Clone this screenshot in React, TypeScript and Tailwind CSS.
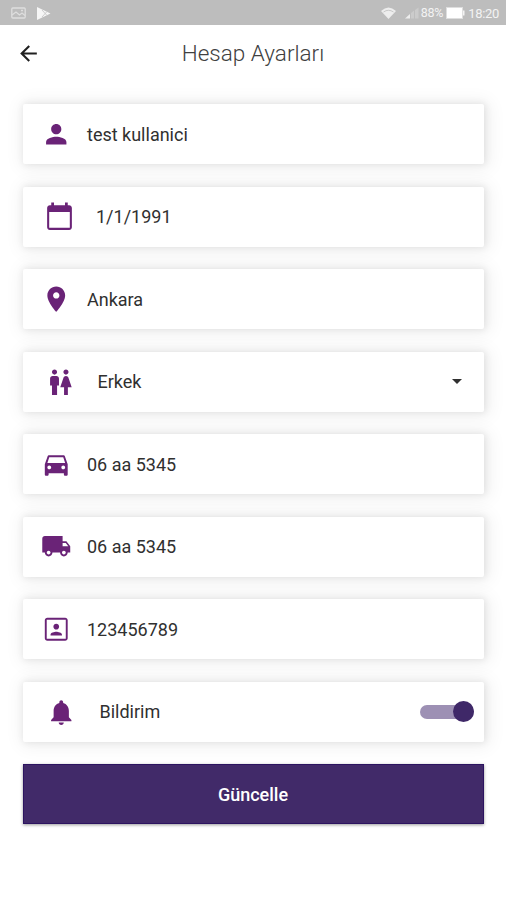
import { useState, type ReactNode } from 'react';

const icons = {
  back: 'M20 11H7.83l5.59-5.59L12 4l-8 8 8 8 1.41-1.41L7.83 13H20v-2z',
  person:
    'M12 12c2.21 0 4-1.79 4-4s-1.79-4-4-4-4 1.79-4 4 1.79 4 4 4zm0 2c-2.67 0-8 1.34-8 4v2h16v-2c0-2.66-5.33-4-8-4z',
  calendar:
    'M19 3h-1V1h-2v2H8V1H6v2H5c-1.11 0-1.99.9-1.99 2L3 19c0 1.1.89 2 2 2h14c1.1 0 2-.9 2-2V5c0-1.1-.9-2-2-2zm0.500 16.500H4.500V8h15v11.500z',
  place:
    'M12 2C8.13 2 5 5.13 5 9c0 5.25 7 13 7 13s7-7.75 7-13c0-3.87-3.13-7-7-7zm0 9.5c-1.38 0-2.5-1.12-2.5-2.5s1.12-2.5 2.5-2.5 2.5 1.12 2.5 2.5-1.12 2.5-2.5 2.5z',
  gender:
    'M5.5 22v-7.5H4V9c0-1.1.9-2 2-2h3c1.1 0 2 .9 2 2v5.5H9.5V22h-4zM18 22v-6h3l-2.54-7.63C18.18 7.55 17.42 7 16.56 7h-.12c-.86 0-1.63.55-1.9 1.37L12 16h3v6h3zM7.5 6c1.11 0 2-.89 2-2s-.89-2-2-2-2 .89-2 2 .89 2 2 2zm9 0c1.11 0 2-.89 2-2s-.89-2-2-2-2 .89-2 2 .89 2 2 2z',
  car: 'M18.92 6.01C18.72 5.42 18.16 5 17.5 5h-11c-.66 0-1.21.42-1.42 1.01L3 12v8c0 .55.45 1 1 1h1c.55 0 1-.45 1-1v-1h12v1c0 .55.45 1 1 1h1c.55 0 1-.45 1-1v-8l-2.08-5.99zM6.5 16c-.83 0-1.5-.67-1.5-1.5S5.67 13 6.5 13s1.5.67 1.5 1.5S7.33 16 6.5 16zm11 0c-.83 0-1.5-.67-1.5-1.5s.67-1.5 1.5-1.5 1.5.67 1.5 1.5-.67 1.5-1.5 1.5zM5 11l1.5-4.5h11L19 11H5z',
  truck:
    'M20 8h-3V4H3c-1.1 0-2 .9-2 2v11h2c0 1.66 1.34 3 3 3s3-1.34 3-3h6c0 1.66 1.34 3 3 3s3-1.34 3-3h2v-5l-3-4zM6 18.5c-.83 0-1.5-.67-1.5-1.5s.67-1.5 1.5-1.5 1.5.67 1.5 1.5-.67 1.5-1.5 1.5zm13.5-9l1.96 2.5H17V9.5h2.5zm-1.5 9c-.83 0-1.5-.67-1.5-1.5s.67-1.5 1.5-1.5 1.5.67 1.5 1.5-.67 1.5-1.5 1.5z',
  portrait:
    'M12 12.25c1.24 0 2.25-1.01 2.25-2.25S13.24 7.75 12 7.75 9.75 8.76 9.75 10s1.01 2.25 2.25 2.25zm4.5 4c0-1.5-3-2.25-4.5-2.25s-4.5.75-4.5 2.25V17h9v-.75zM19 3H5c-1.1 0-2 .9-2 2v14c0 1.1.9 2 2 2h14c1.1 0 2-.9 2-2V5c0-1.1-.9-2-2-2zm0.500 16.500H4.500V4.500h15v15z',
  bell: 'M12 22c1.1 0 2-.9 2-2h-4c0 1.1.89 2 2 2zm6-6v-5c0-3.07-1.64-5.64-4.5-6.32V4c0-.83-.67-1.5-1.5-1.5s-1.5.67-1.5 1.5v.68C7.63 5.36 6 7.92 6 11v5l-2 2v1h16v-1l-2-2z'
};

type IconName = keyof typeof icons;

function Icon({ name, className }: { name: IconName; className: string }) {
  return (
    <svg className={className} viewBox="0 0 24 24" fill="currentColor">
      <path d={icons[name]} />
    </svg>
  );
}

type Field = {
  id: string;
  icon: IconName;
  label: string;
  iconClass: string;
  textClass: string;
};

const plainIcon = 'ml-[18px] size-[30.5px]';
const plainText = 'ml-[15.5px]';

const fields: Field[] = [
  { id: 'name', icon: 'person', label: 'test kullanici', iconClass: plainIcon, textClass: plainText },
  { id: 'birthday', icon: 'calendar', label: '1/1/1991', iconClass: 'ml-[19.5px] mt-0.5 size-[33px]', textClass: 'ml-[20.5px]' },
  { id: 'city', icon: 'place', label: 'Ankara', iconClass: plainIcon, textClass: plainText },
  { id: 'gender', icon: 'gender', label: 'Erkek', iconClass: 'ml-[21.5px] mt-px size-[30.5px]', textClass: 'ml-[22.5px]' },
  { id: 'car', icon: 'car', label: '06 aa 5345', iconClass: plainIcon, textClass: plainText },
  { id: 'truck', icon: 'truck', label: '06 aa 5345', iconClass: plainIcon, textClass: plainText },
  { id: 'identity', icon: 'portrait', label: '123456789', iconClass: plainIcon, textClass: plainText },
  { id: 'notifications', icon: 'bell', label: 'Bildirim', iconClass: 'ml-[23px] mt-px size-[30.5px]', textClass: 'ml-[23px]' }
];

function StatusBar() {
  return (
    <div className="flex h-[25px] items-center bg-[#bdbdbd] pt-px pl-[11px] pr-[7px] text-[#f3f3f3]">
      <svg className="h-3 w-[15px]" viewBox="0 0 15 12" fill="none" stroke="#dedede" strokeWidth="1.3">
        <rect x="0.8" y="1" width="13.4" height="10" rx="1" />
        <path d="M1 8l4-3 3.500 3 2.500-2 3 2.500M10 3.500h2" />
      </svg>
      <svg className="ml-2.5 h-[15px] w-[15px]" viewBox="0 0 15 15">
        <path d="M1 1l13.5 6.5L1 14z" fill="#f6f6f6" />
        <path d="M6 4l5 5.500M6 11l5-5.500" fill="none" stroke="#c8c8c8" strokeWidth="0.9" />
      </svg>
      <svg className="ml-auto h-[13px] w-[15px]" viewBox="0 0 15 13">
        <path d="M0 4Q7.500-3 15 4L7.500 12z" fill="#ededed" />
        <path d="M2.500 5Q7.500 1.500 12.500 5" fill="none" stroke="#c4c4c4" strokeWidth="0.9" />
      </svg>
      <svg className="ml-2 h-3 w-[15px]" viewBox="0 0 15 12">
        <path d="M1 11.500L6 7v4.500z" fill="#ededed" />
        <path d="M7 6l3-2.500v8H7zM11 3l3.500-2.500v11H11z" fill="#cbcbcb" />
      </svg>
      <span className="ml-0.5 text-[12.5px] leading-none tracking-[-0.3px]">88%</span>
      <svg className="ml-[3px] h-3 w-[19px]" viewBox="0 0 19 12">
        <rect x="0.5" y="0.500" width="16" height="11" fill="#fff" stroke="#dedede" />
        <path d="M17 3.500h1.500v5H17z" fill="#f3f3f3" />
      </svg>
      <span className="ml-[3px] text-[13px] leading-none tracking-[-0.3px]">18:20</span>
    </div>
  );
}

function FieldCard({ field, children }: { field: Field; children?: ReactNode }) {
  return (
    <div className="flex h-[60px] items-center rounded-[2px] bg-white text-[18px] text-[#303030] shadow-[2px_1px_18px_4px_rgba(0,0,0,0.06),1px_0_7px_1px_rgba(0,0,0,0.08)]">
      <Icon name={field.icon} className={`shrink-0 text-[#6a2377] ${field.iconClass}`} />
      <span className={field.textClass}>{field.label}</span>
      {children}
    </div>
  );
}

export default function App() {
  const [enabled, setEnabled] = useState(true);

  return (
    <div className="min-h-[900px] bg-white font-[Roboto,sans-serif]">
      <StatusBar />
      <header className="grid h-14 grid-cols-[1fr_auto_1fr] items-center">
        <button className="ml-4 w-fit text-[#202020]" aria-label="Geri">
          <Icon name="back" className="size-[25px]" />
        </button>
        <h1 className="pt-0.5 text-[22.5px] font-light text-[#404040]">Hesap Ayarları</h1>
      </header>

      <main className="flex flex-col gap-[22.5px] pt-[23px] pr-[22px] pl-[23px]">
        {fields.map((field) => (
          <FieldCard key={field.id} field={field}>
            {field.id === 'gender' && (
              <svg className="mr-[22px] ml-auto h-[5px] w-2.5" viewBox="0 0 10 5" fill="#303030">
                <path d="M0 0h10L5 5z" />
              </svg>
            )}
            {field.id === 'notifications' && (
              <button
                role="switch"
                aria-checked={enabled}
                aria-label={field.label}
                onClick={() => setEnabled(!enabled)}
                className={`mr-2.5 ml-auto flex h-3.5 w-[54px] items-center rounded-full bg-[#9d90b4] ${enabled ? 'justify-end' : 'justify-start'}`}
              >
                <span className="size-[21px] rounded-full bg-[#3f2868]" />
              </button>
            )}
          </FieldCard>
        ))}
        <button className="h-[60px] border border-[#2c1460] bg-[#412a69] pr-px text-[18px] font-medium text-white shadow-[0_1px_3px_rgba(0,0,0,0.4)]">
          Güncelle
        </button>
      </main>
    </div>
  );
}
